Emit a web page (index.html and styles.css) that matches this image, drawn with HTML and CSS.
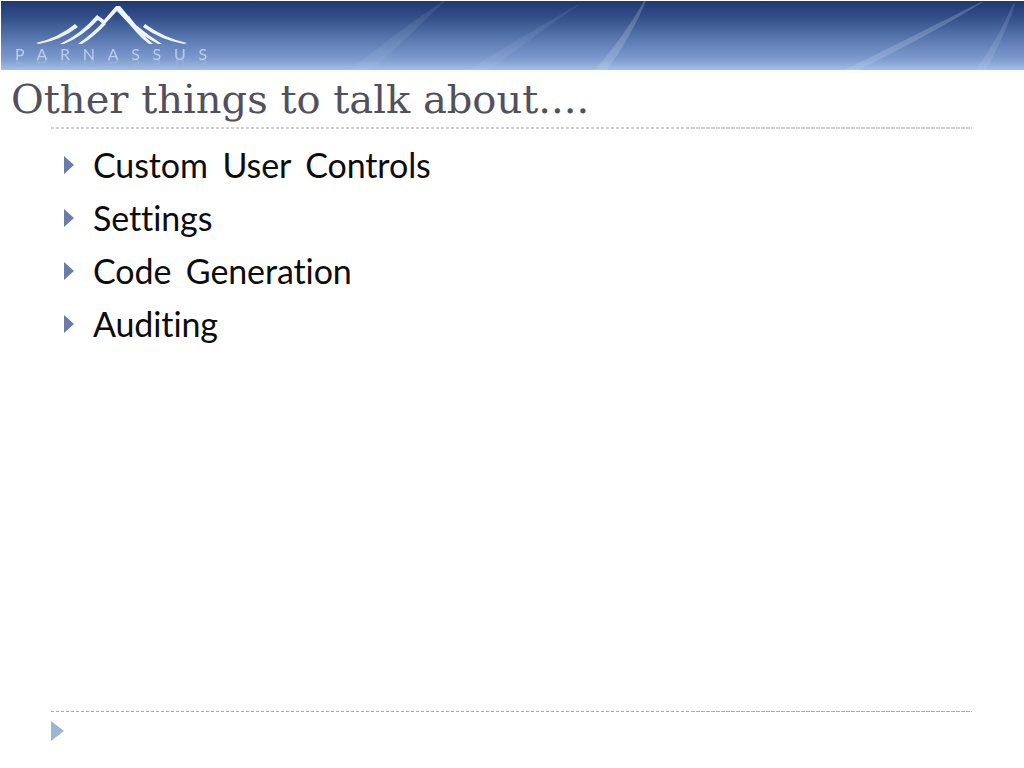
FILE: index.html
```html
<!DOCTYPE html>
<html lang="en">
<head>
<meta charset="utf-8">
<title>Other things to talk about</title>
<link rel="stylesheet" href="styles.css">
</head>
<body>
<div class="slide">
  <header class="banner">
    <svg class="streaks" width="1024" height="70" viewBox="0 0 1024 70" aria-hidden="true">
      <g fill="#c4d8f0">
        <path d="M350 70Q400 30 443 1L445 1Q410 35 372 70Z" fill-opacity=".1"/>
        <path d="M468 70Q525 35 577 5L579 5Q535 35 490 70Z" fill-opacity=".1"/>
        <path d="M595 70Q625 35 644 1L646 1Q632 35 607 70Z" fill-opacity=".24"/>
        <path d="M845 70Q925 30 981 2L983 2Q930 35 858 70Z" fill-opacity=".24"/>
        <path d="M976 70Q1000 35 1013 4L1015 4Q1005 35 986 70Z" fill-opacity=".16"/>
      </g>
    </svg>
    <div class="logo">
      <svg class="peaks" width="190" height="42" viewBox="0 0 190 42" aria-hidden="true">
        <g fill="#eef4fb">
          <path d="M115 2L119 2 135 21Q148 32 161 40L157 40Q142 32 130 22L116 7 103 21 97 16Q82 32 63 40L59 40Q80 30 96 11L103 16Z"/>
          <path d="M77 40Q91 30 102 18L105 20Q94 32 81 40Z"/>
          <path d="M148 40Q135 30 125 15L128 12Q138 28 152 40Z"/>
          <path d="M35 39Q57 34 74 20L77 23Q60 36 38 40Z"/>
          <path d="M186 39Q163 34 144 20L142 23Q160 36 183 40Z"/>
        </g>
      </svg>
      <div class="wordmark">PARNASSUS</div>
    </div>
  </header>
  <h1 class="title">Other things to talk about....</h1>
  <div class="rule"></div>
  <ul class="points">
    <li class="point">Custom User Controls</li>
    <li class="point">Settings</li>
    <li class="point">Code Generation</li>
    <li class="point">Auditing</li>
  </ul>
  <footer class="foot">
    <div class="rule rule-foot"></div>
    <div class="foot-mark"></div>
  </footer>
</div>
</body>
</html>
```

FILE: styles.css
```css
html, body { margin: 0; padding: 0; background: #fff; }
.slide { width: 1024px; height: 768px; display: flex; flex-direction: column; overflow: hidden; }
.banner {
  position: relative;
  height: 69px;
  margin: 1px 0 0 1px;
  overflow: hidden;
  background: linear-gradient(#1f3872 0%, #34518a 25%, #5a78b0 55%, #7f9ccf 85%, #a4bee4 100%);
}
.streaks { position: absolute; left: -1px; top: -1px; }
.logo { position: relative; padding: 3px 0 0 0; }
.peaks { display: block; }
.wordmark {
  margin: 0 0 0 14px;
  font-family: "Lato", sans-serif;
  font-size: 16px;
  line-height: 16px;
  letter-spacing: 12.7px;
  color: #b9cdea;
  -webkit-box-reflect: below -5px linear-gradient(transparent 40%, rgba(255,255,255,.55));
}
.title {
  margin: 6px 0 0 11px;
  font-family: "DejaVu Serif", serif;
  font-weight: 400;
  font-size: 40px;
  line-height: 46px;
  color: #50505e;
  white-space: nowrap;
}
.rule {
  margin: 5px 0 0 51px;
  width: 921px;
  height: 2px;
  background: repeating-linear-gradient(90deg, #d0d0d0 0 3.5px, transparent 3.5px 5px);
}
.points { list-style: none; margin: 9px 0 0 0; padding: 0 0 0 93px; }
.point {
  position: relative;
  font-family: "Lato", sans-serif;
  font-size: 34px;
  font-variant-ligatures: none;
  letter-spacing: -0.1px;
  word-spacing: 6px;
  line-height: 53px;
  color: #0c0c0c;
}
.point::before {
  content: "";
  position: absolute;
  left: -29px;
  top: 18px;
  border-left: 10px solid #6b7cab;
  border-top: 9.5px solid transparent;
  border-bottom: 9.5px solid transparent;
}
.foot { margin-top: auto; padding-bottom: 27px; }
.rule-foot {
  margin-top: 0;
  height: 1px;
  background: repeating-linear-gradient(90deg, #9fb2c4 0 3.5px, transparent 3.5px 5px);
}
.foot-mark {
  margin: 9px 0 0 51px;
  width: 0;
  border-left: 13px solid #9bb6d4;
  border-top: 10px solid transparent;
  border-bottom: 10px solid transparent;
}
```
